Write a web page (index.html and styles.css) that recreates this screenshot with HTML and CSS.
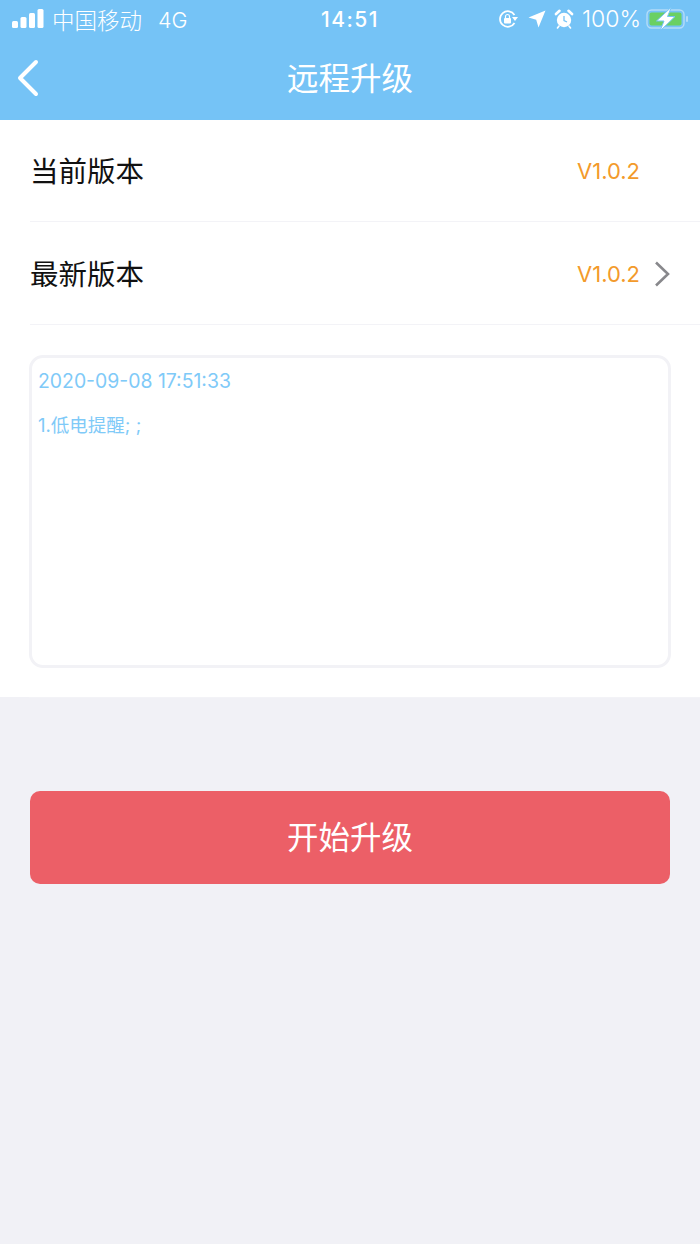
FILE: index.html
```html
<!DOCTYPE html>
<html lang="zh-CN">

<head>
    <meta charset="UTF-8">
    <meta name="viewport" content="width=device-width, initial-scale=1.0">
    <title>远程升级</title>
    <link rel="stylesheet" href="styles.css">
</head>

<body>

    <!-- Header with status bar -->
    <header class="header">
        <div class="status-bar">
            <div class="status-left">
                <svg class="signal" width="32" height="20" viewBox="0 0 32 20">
                    <rect x="0" y="12" width="6" height="7" rx="1.500" fill="#fff"/>
                    <rect x="8.500" y="8" width="6" height="11" rx="1.500" fill="#fff"/>
                    <rect x="17" y="4" width="6" height="15" rx="1.500" fill="#fff"/>
                    <rect x="25.500" y="0" width="6" height="19" rx="1.500" fill="#fff"/>
                </svg>
                <span class="carrier">中国移动</span>
                <span class="network">4G</span>
            </div>
            <div class="status-time">14:51</div>
            <div class="status-right">
                <svg width="22" height="20" viewBox="0 0 22 20">
                    <path d="M16.500 14A7.800 7.800 0 1 1 16.500 6" fill="none" stroke="#fff" stroke-width="1.700"/>
                    <path d="M14 8L20 8L17 12Z" fill="#fff"/>
                    <rect x="6" y="9" width="7" height="5.500" rx="1" fill="#fff"/>
                    <path d="M7.500 9V7.500a2 2 0 0 1 4 0V9" fill="none" stroke="#fff" stroke-width="1.200"/>
                </svg>
                <svg class="icon-location" width="18" height="18" viewBox="0 0 18 18">
                    <path d="M17.500 0.500L10.500 17.500L8.200 9.800L0.500 7.500Z" fill="#fff"/>
                </svg>
                <svg class="icon-alarm" width="20" height="20" viewBox="0 0 20 20">
                    <circle cx="10" cy="11" r="7.200" fill="#fff"/>
                    <path d="M10 7V11.500L13 13" fill="none" stroke="#75c3f6" stroke-width="1.300"/>
                    <path d="M2 5L5.500 1.800M18 5L14.500 1.800" stroke="#fff" stroke-width="2.600" stroke-linecap="round"/>
                    <path d="M5 17L3.500 19M15 17L16.500 19" stroke="#fff" stroke-width="1.600" stroke-linecap="round"/>
                </svg>
                <span class="battery-text">100%</span>
                <svg class="battery" width="44" height="24" viewBox="0 0 44 24">
                    <rect x="1" y="3" width="37" height="18" rx="4.500" fill="none" stroke="#b4dcf8" stroke-width="1.400"/>
                    <rect x="3.500" y="5.500" width="32" height="13" rx="2" fill="#6ad063"/>
                    <rect x="40" y="9" width="2" height="6" rx="1" fill="#b4dcf8"/>
                    <path d="M25.500 0L10.500 14H18L14 24L29 9.500H21.500Z" fill="#fff" stroke="#75c3f6" stroke-width="1"/>
                </svg>
            </div>
        </div>
        <div class="nav-bar">
            <svg class="back" width="24" height="38" viewBox="0 0 24 38">
                <path d="M20 3L4 19L20 35" fill="none" stroke="#fff" stroke-width="4" stroke-linecap="round" stroke-linejoin="round"/>
            </svg>
            <h1 class="nav-title">远程升级</h1>
        </div>
    </header>

    <!-- Version info -->
    <section class="panel">
        <div class="row">
            <span class="row-label">当前版本</span>
            <span class="row-value">V1.0.2</span>
        </div>
        <div class="row">
            <span class="row-label">最新版本</span>
            <span class="row-value">V1.0.2</span>
            <svg class="chevron" width="16" height="26" viewBox="0 0 16 26">
                <path d="M2 1.500L14 13L2 24.500" fill="none" stroke="#88888c" stroke-width="2.600"/>
            </svg>
        </div>
        <div class="notes-wrap">
            <div class="notes">
                <p class="notes-date">2020-09-08 17:51:33</p>
                <p class="notes-text">1.低电提醒; ;</p>
            </div>
        </div>
    </section>

    <!-- Upgrade button -->
    <div class="action">
        <button class="upgrade-btn">开始升级</button>
    </div>

</body>

</html>
```
FILE: styles.css
```css
body {
    font-family: 'Inter', 'Noto Sans CJK SC', sans-serif;
    background-color: #f1f1f6;
    color: #111;
    margin: 0;
    padding: 0;
    height: 1244px;
    overflow: hidden;
}

/* Header */
.header {
    height: 120px;
    background-color: #75c3f6;
    color: white;
}

.status-bar {
    height: 38px;
    display: grid;
    grid-template-columns: 1fr auto 1fr;
    align-items: center;
    padding: 0 12px;
}

.status-left {
    display: flex;
    align-items: center;
}

.carrier {
    margin-left: 8px;
    font-size: 22.500px;
    font-weight: 300;
    font-family: 'Noto Sans CJK SC', sans-serif;
}

.network {
    margin-left: 16px;
    margin-top: 2px;
    font-size: 21.500px;
    font-weight: 300;
}

.status-time {
    font-size: 21px;
    font-weight: 500;
    letter-spacing: 1.500px;
}

.status-right {
    display: flex;
    align-items: center;
    justify-content: flex-end;
    margin-right: -2px;
}

.icon-location {
    margin-left: 8px;
}

.icon-alarm {
    margin-left: 8px;
}

.battery-text {
    margin-left: 8px;
    font-size: 23px;
    font-weight: 300;
}

.battery {
    margin-left: 5px;
}

.nav-bar {
    height: 82px;
    display: flex;
    align-items: center;
    justify-content: center;
    position: relative;
}

.back {
    position: absolute;
    left: 16px;
    top: 21px;
}

.nav-title {
    margin: 0 0 7px 0;
    font-size: 31.500px;
    font-weight: 400;
    font-family: 'Noto Sans CJK SC', sans-serif;
}

/* Panel */
.panel {
    background-color: white;
    height: 577px;
    padding-left: 30px;
}

.row {
    height: 101px;
    display: flex;
    align-items: center;
    border-bottom: 1px solid #f3f3f7;
    padding-right: 30px;
    margin-bottom: 1px;
}

.row-label {
    flex: 1;
    font-size: 28.500px;
    font-family: 'Noto Sans CJK SC', sans-serif;
    margin-bottom: 3px;
}

.row-value {
    color: #f39a2b;
    font-size: 22px;
    margin-right: 30px;
}

.chevron {
    margin-left: -16px;
}

.notes-wrap {
    padding: 29px 29px 29px 0;
    margin-left: -1px;
    border-bottom: 1px solid #f3f3f7;
}

.notes {
    box-sizing: border-box;
    height: 313px;
    border: 3px solid #f2f2f6;
    border-radius: 14px;
    padding: 10px 6px;
    color: #7fcaf8;
    font-size: 18.500px;
}

.notes p {
    margin: 0;
    line-height: 26px;
}

.notes .notes-date {
    font-size: 19.400px;
}

.notes-text {
    padding-top: 18px;
}

/* Button */
.action {
    padding: 94px 30px 0 30px;
}

.upgrade-btn {
    display: block;
    width: 100%;
    height: 93px;
    background-color: #ec5f67;
    color: white;
    border: none;
    border-radius: 10px;
    font-size: 31.500px;
    font-weight: 400;
    font-family: 'Noto Sans CJK SC', sans-serif;
    padding-bottom: 6px;
}
```
